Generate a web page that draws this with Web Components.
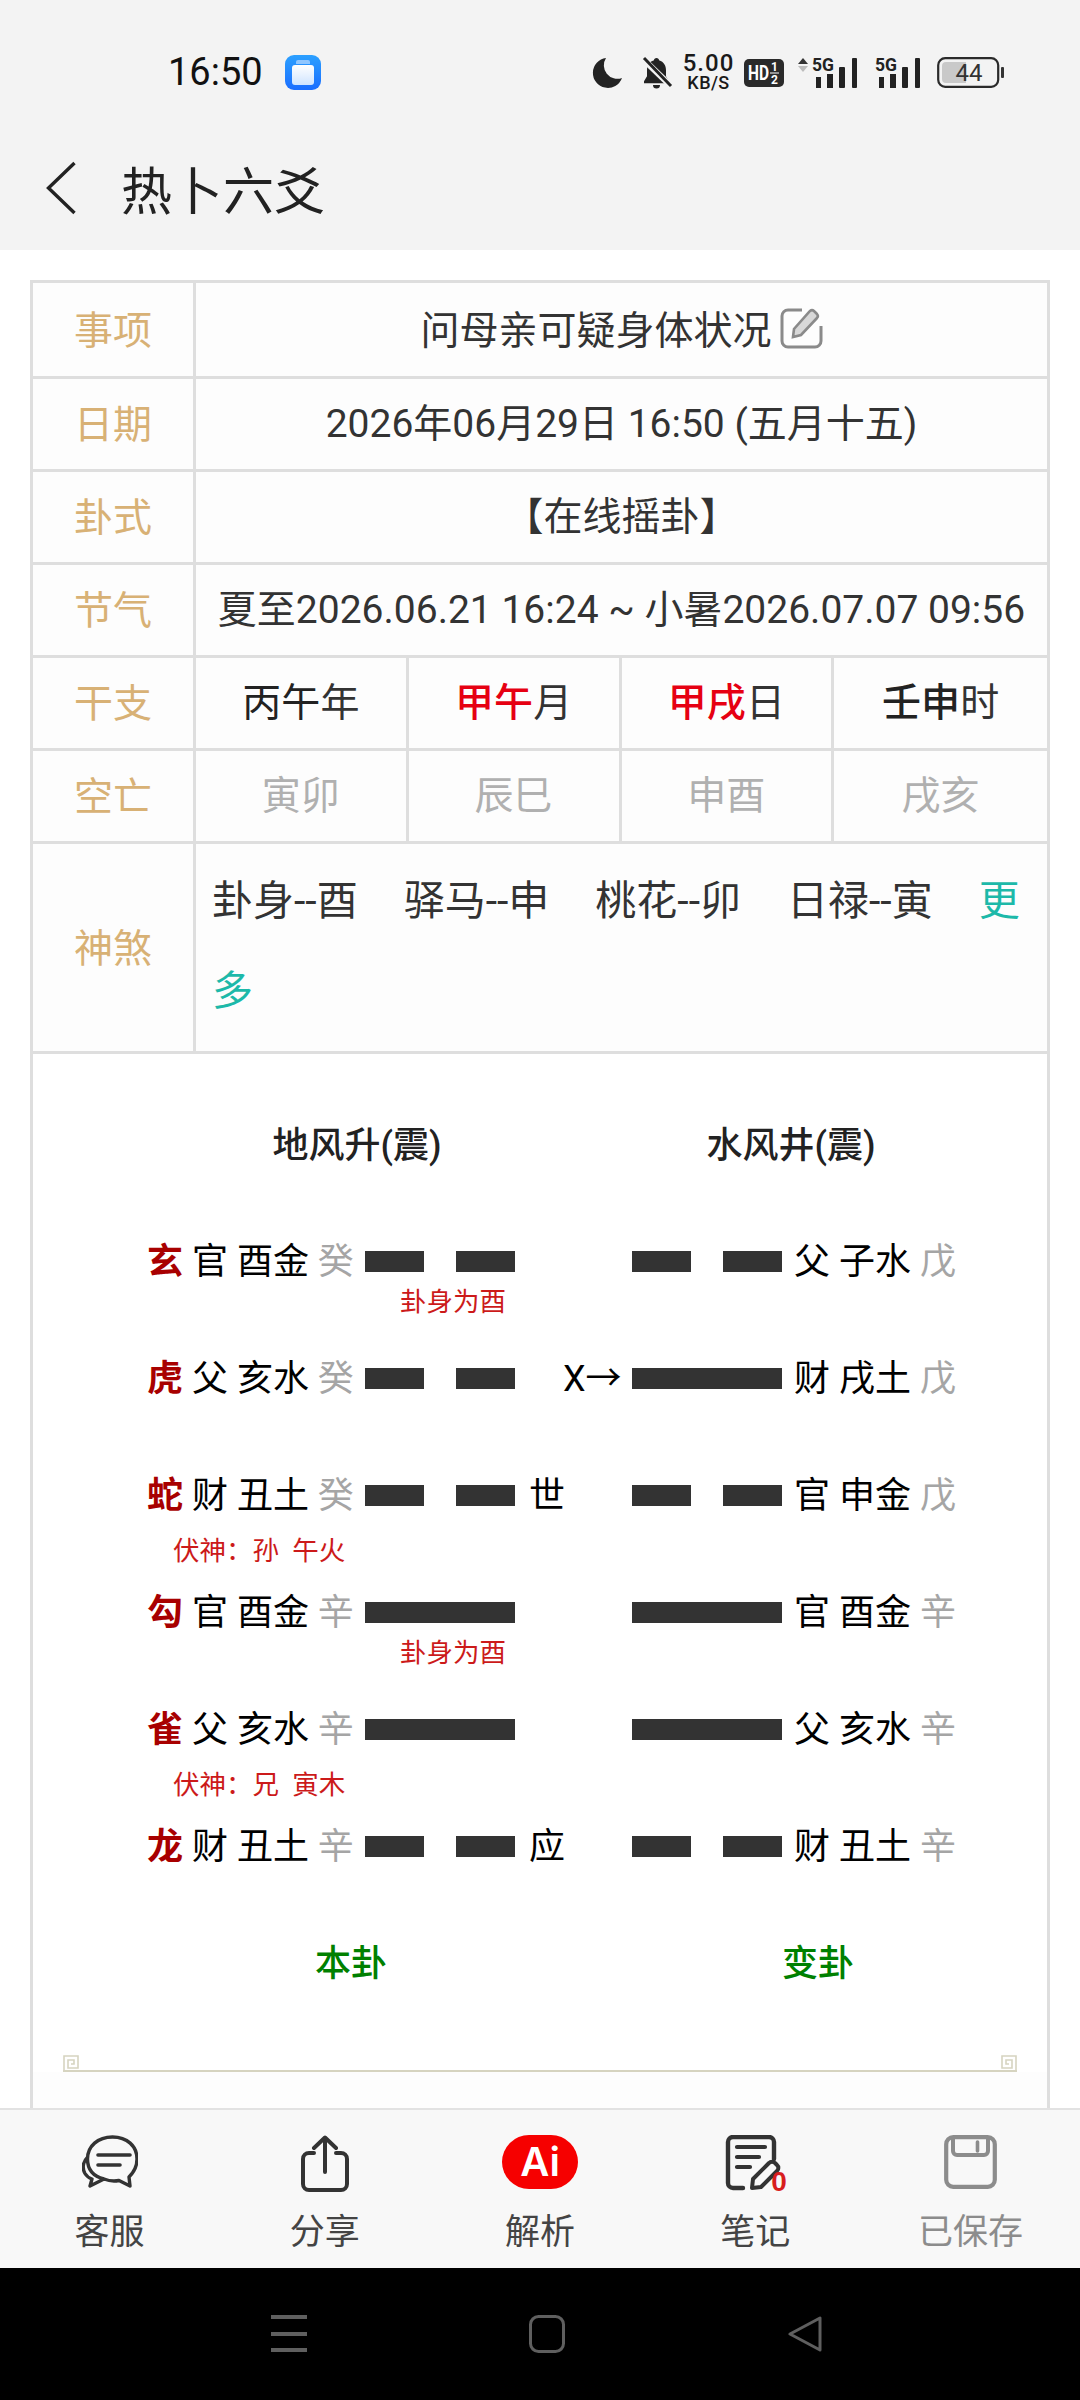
<!DOCTYPE html>
<html lang="zh-CN">
<head>
<meta charset="utf-8">
<title>热卜六爻</title>
<style>
html,body{margin:0;padding:0;background:#fff}
body{font-family:Roboto,"Noto Sans CJK SC",sans-serif}
</style>
</head>
<body>
<app-shell>
  <status-bar slot="top"></status-bar>
  <title-bar slot="top">热卜六爻</title-bar>
  <info-table>
    <info-row label="事项" first><edit-note>问母亲可疑身体状况</edit-note></info-row>
    <info-row label="日期">2026年06月29日 16:50 (五月十五)</info-row>
    <info-row label="卦式">【在线摇卦】</info-row>
    <info-row label="节气">夏至2026.06.21 16:24 ~ 小暑2026.07.07 09:56</info-row>
    <quad-row label="干支">
      <span><b style="font-weight:400;color:#222">丙午</b>年</span>
      <span><b style="font-weight:500;color:#e60012">甲午</b>月</span>
      <span><b style="font-weight:500;color:#e60012">甲戌</b>日</span>
      <span><b style="font-weight:500;color:#222">壬申</b>时</span>
    </quad-row>
    <quad-row label="空亡" muted>
      <span>寅卯</span><span>辰巳</span><span>申酉</span><span>戌亥</span>
    </quad-row>
    <shensha-row label="神煞">
      <span>卦身--酉</span><span>驿马--申</span><span>桃花--卯</span><span>日禄--寅</span><more-link>更多</more-link>
    </shensha-row>
    <hex-chart>
      <yao-row god="玄" left="官 酉金" lgan="癸" a="yin" right="父 子水" rgan="戊" b="yin"><span slot="barnote">卦身为酉</span></yao-row>
      <yao-row god="虎" left="父 亥水" lgan="癸" a="yin" right="财 戌土" rgan="戊" b="yang"><span slot="change">X→</span></yao-row>
      <yao-row god="蛇" left="财 丑土" lgan="癸" a="yin" right="官 申金" rgan="戊" b="yin"><span slot="shi">世</span><span slot="fu">伏神：孙&nbsp;&nbsp;午火</span></yao-row>
      <yao-row god="勾" left="官 酉金" lgan="辛" a="yang" right="官 酉金" rgan="辛" b="yang"><span slot="barnote">卦身为酉</span></yao-row>
      <yao-row god="雀" left="父 亥水" lgan="辛" a="yang" right="父 亥水" rgan="辛" b="yang"><span slot="fu">伏神：兄&nbsp;&nbsp;寅木</span></yao-row>
      <yao-row god="龙" left="财 丑土" lgan="辛" a="yin" right="财 丑土" rgan="辛" b="yin"><span slot="shi">应</span></yao-row>
    </hex-chart>
  </info-table>
  <bottom-nav slot="bottom"></bottom-nav>
  <system-nav slot="bottom"></system-nav>
</app-shell>

<script>
const def=(name,html)=>customElements.define(name,class extends HTMLElement{
  constructor(){super();this.attachShadow({mode:'open'}).innerHTML=html}
});

def('app-shell',`<style>
:host{display:flex;flex-direction:column;width:1080px;height:2400px;overflow:hidden;background:#fff}
.main{flex:1;min-height:0;overflow:hidden;padding:30px 30px 0}
</style>
<slot name="top"></slot><div class="main"><slot></slot></div><slot name="bottom"></slot>`);

def('status-bar',`<style>
:host{display:flex;align-items:center;height:55px;padding:45px 76px 0 168px;background:#f3f3f3;color:#111;font-family:Roboto,sans-serif;box-sizing:content-box}
.time{font-size:38px;line-height:44px;width:95px;margin-top:-1px}
.app{width:36px;height:35px;border-radius:9px;margin-left:22px;background:linear-gradient(#2ba0ff,#1a6dff);display:flex;flex-direction:column;align-items:center;justify-content:center}
.app i{display:block;width:14px;height:4px;background:#8fc6ff;border-radius:2px 2px 0 0;margin-bottom:1px}
.app b{display:block;width:22px;height:20px;background:linear-gradient(#fff,#cfe4ff);border-radius:3px}
svg{display:block;flex:none;overflow:visible}
.right{margin-left:auto;display:flex;align-items:center}
.speed{width:53px;margin-left:10px;text-align:center;font-weight:500;color:#1a1a1a}
.speed div:first-child{font-size:24px;line-height:18px;letter-spacing:1px}
.speed div:last-child{font-size:18px;line-height:17px;margin-top:2px;letter-spacing:.4px}
</style>
<div class="time">16:50</div>
<div class="app"><i></i><b></b></div>
<div class="right">
<svg width="30" height="31" viewBox="0 0 30 31"><path d="M13 1A15 15 0 1 0 29 21A13.5 13.5 0 0 1 13 1Z" fill="#232323"/></svg>
<svg width="30" height="34" viewBox="0 0 30 34" style="margin-left:19px"><path d="M14.5 2c1.5 0 2.5 1 2.5 2.2c5 1.5 7 5.5 7 10v6l3 5v2H2v-2l3-5v-6c0-4.5 2-8.5 7-10C12 3 13 2 14.5 2Z" fill="#232323"/><path d="M11 29h7a3.5 3.5 0 0 1-7 0Z" fill="#232323"/><path d="M1 3l28 27" stroke="#f3f3f3" stroke-width="6"/><path d="M2 2l27 28" stroke="#232323" stroke-width="3"/></svg>
<div class="speed"><div>5.00</div><div>KB/S</div></div>
<svg width="40" height="28" viewBox="0 0 40 28" style="margin-left:9px"><rect width="40" height="28" rx="5" fill="#2a2a2a"/><text x="4" y="21" font-family="Roboto" font-weight="700" font-size="20" fill="#fff" textLength="21" lengthAdjust="spacingAndGlyphs">HD</text><text x="27" y="12" font-family="Roboto" font-weight="700" font-size="12" fill="#fff">1</text><path d="M26 14h9" stroke="#fff" stroke-width="1"/><text x="27" y="25" font-family="Roboto" font-weight="700" font-size="12" fill="#fff">2</text></svg>
<svg width="60" height="40" viewBox="0 -4 60 40" style="margin-left:14px"><path d="M5 1l5 6H0Z" fill="#333"/><path d="M5 15l5-6H0Z" fill="#bbb"/><text x="14" y="14" font-family="Roboto" font-weight="700" font-size="19" fill="#222" textLength="22" lengthAdjust="spacingAndGlyphs">5G</text><rect x="18" y="20" width="5" height="11" fill="#222"/><rect x="29" y="17" width="6" height="14" fill="#222"/><rect x="41" y="10" width="6" height="21" rx="1" fill="#222"/><rect x="54" y="1" width="5" height="30" rx="1" fill="#222"/></svg>
<svg width="46" height="40" viewBox="0 -4 46 40" style="margin-left:17px"><text x="0" y="14" font-family="Roboto" font-weight="700" font-size="19" fill="#222" textLength="22" lengthAdjust="spacingAndGlyphs">5G</text><rect x="4" y="20" width="5" height="11" fill="#222"/><rect x="15" y="17" width="6" height="14" fill="#222"/><rect x="27" y="10" width="6" height="21" rx="1" fill="#222"/><rect x="40" y="1" width="5" height="30" rx="1" fill="#222"/></svg>
<svg width="67" height="32" viewBox="0 0 67 32" style="margin-left:16px"><rect x="1.2" y="1.2" width="60" height="28.6" rx="7" fill="none" stroke="#2a2a2a" stroke-width="2.2"/><path d="M9 5h20v21H9a4 4 0 0 1-4-4V9a4 4 0 0 1 4-4Z" fill="#c9c9c9"/><rect x="64" y="10" width="3" height="11" rx="1" fill="#333"/><text x="32" y="24" text-anchor="middle" font-family="Roboto" font-size="24" fill="#333">44</text></svg>
</div>`);

def('title-bar',`<style>
:host{display:flex;align-items:center;height:124px;padding-top:26px;background:#f3f3f3;color:#222;font-size:51px;font-family:"Noto Sans CJK SC",sans-serif}
svg{display:block;margin-left:46px;margin-right:45px}
</style>
<svg width="30" height="54" viewBox="0 0 30 54"><path d="M28.5 2L2.5 27L28.5 52" fill="none" stroke="#222" stroke-width="3.4"/></svg><slot></slot>`);

def('info-table',`<style>
:host{display:block;border:3px solid #dedede;border-bottom:0;background:#fdfdfd;color:#333;font-size:39px;height:1900px;box-sizing:border-box}
</style><slot></slot>`);

const rowStyle=`
:host{display:grid;grid-template-columns:163px 1fr;height:93px;box-sizing:border-box;border-top:3px solid #dedede}
.l{display:flex;align-items:center;justify-content:center;color:#d8b175;border-right:3px solid #dedede;padding-bottom:6px}
`;
customElements.define('info-row',class extends HTMLElement{
  constructor(){super();const s=this.attachShadow({mode:'open'});
    s.innerHTML=`<style>${rowStyle}
    :host([first]){border-top:0}
    :host([first]) .v{padding-bottom:6px}
    .v{display:flex;align-items:center;justify-content:center;white-space:nowrap;padding-bottom:9px}
    </style><div class="l"></div><div class="v"><slot></slot></div>`;}
  connectedCallback(){this.shadowRoot.querySelector('.l').textContent=this.getAttribute('label')}
});
def('edit-note',`<style>:host{display:flex;align-items:center}
svg{display:block;margin-left:8px;margin-top:3px}</style>
<slot></slot><svg width="43" height="42" viewBox="0 0 43 42"><path d="M22 3H8a6 6 0 0 0-6 6V34a6 6 0 0 0 6 6H35a6 6 0 0 0 6-6V19" fill="none" stroke="#8a8a8a" stroke-width="3"/><path d="M13 30l1-8L30 4a3 3 0 0 1 4 0l3 3a3 3 0 0 1 0 4L21 28Z" fill="#d8d8d8" stroke="#8a8a8a" stroke-width="2.6"/></svg>`);

customElements.define('quad-row',class extends HTMLElement{
  constructor(){super();const s=this.attachShadow({mode:'open'});
    s.innerHTML=`<style>${rowStyle}
    :host([muted]) .v{color:#b0b0b0}
    .v{display:grid;grid-template-columns:repeat(4,1fr)}
    ::slotted(span){display:flex;align-items:center;justify-content:center;border-right:3px solid #dedede;padding-bottom:9px}
    ::slotted(span:last-child){border-right:0}
    </style><div class="l"></div><div class="v"><slot></slot></div>`;}
  connectedCallback(){this.shadowRoot.querySelector('.l').textContent=this.getAttribute('label')}
});

customElements.define('shensha-row',class extends HTMLElement{
  constructor(){super();const s=this.attachShadow({mode:'open'});
    s.innerHTML=`<style>${rowStyle}
    :host{height:210px}
    .v{padding:12px 0 0 16px;line-height:90px;font-size:41px}
    ::slotted(span){margin-right:46px;white-space:nowrap}
    </style><div class="l"></div><div class="v"><slot></slot></div>`;}
  connectedCallback(){this.shadowRoot.querySelector('.l').textContent=this.getAttribute('label')}
});
def('more-link',`<style>:host{color:#1db9a9}</style><slot></slot>`);

def('hex-chart',`<style>
:host{display:block;border-top:3px solid #dedede;background:#fff;padding-top:67px;font-size:36px;color:#000}
.titles,.foot{display:grid;line-height:50px;height:50px;text-align:center;white-space:nowrap}
.titles{grid-template-columns:648px 220px;font-weight:500;color:#222;margin-bottom:66px}
.foot{grid-template-columns:636px 298px;color:#008000;font-weight:500}
.orn{display:flex;justify-content:space-between;height:15px;margin:66px 30px 0;border-bottom:2px solid #d6d4c0}
svg{display:block}
</style>
<div class="titles"><span>地风升(震)</span><span>水风井(震)</span></div>
<slot></slot>
<div class="foot"><span>本卦</span><span>变卦</span></div>
<div class="orn">
<svg width="16" height="16" viewBox="0 0 16 16"><path d="M1 16V1H15V13H5V5H11V9H8" fill="none" stroke="#d6d4c0" stroke-width="1.6"/></svg>
<svg width="16" height="16" viewBox="0 0 16 16" style="transform:scaleX(-1)"><path d="M1 16V1H15V13H5V5H11V9H8" fill="none" stroke="#d6d4c0" stroke-width="1.6"/></svg>
</div>`);

customElements.define('yao-row',class extends HTMLElement{
  constructor(){super();this.attachShadow({mode:'open'})}
  connectedCallback(){
    const a=k=>this.getAttribute(k);
    const bar=t=>t==='yang'?'<div class="bar"><i></i></div>':'<div class="bar"><i></i><i></i></div>';
    this.shadowRoot.innerHTML=`<style>
    :host{display:block;height:117px;white-space:nowrap;line-height:50px}
    .line{display:grid;grid-template-columns:332px 150px 117px 150px 1fr;height:50px;align-items:center}
    .left{padding-left:114px}
    .god{color:#a80000;font-weight:700}
    .gan{color:#a5a5a5}
    .bar{display:flex;justify-content:space-between;height:21px;margin-top:-2px}
    .bar i{flex:0 0 59px;background:#333}
    .bar i:only-child{flex:1}
    .mid{display:flex;justify-content:space-between;padding:0 14px}
    .right{padding-left:12px}
    .notes{display:grid;grid-template-columns:332px 150px;font-size:26.5px;line-height:30px;color:#cc1a1a}
    .fu{padding:15px 0 0 140px;display:block}
    .bn{padding:0 0 0 35px;display:block;white-space:nowrap}
    ::slotted([slot=change]){margin-left:34px}
    </style>
    <div class="line">
      <div class="left"><span class="god">${a('god')}</span> ${a('left')} <span class="gan">${a('lgan')}</span></div>
      ${bar(a('a'))}
      <div class="mid"><slot name="shi"></slot><slot name="change"></slot></div>
      ${bar(a('b'))}
      <div class="right">${a('right')} <span class="gan">${a('rgan')}</span></div>
    </div>
    <div class="notes"><div class="fu"><slot name="fu"></slot></div><div class="bn"><slot name="barnote"></slot></div></div>`;
  }
});

def('bottom-nav',`<style>
:host{display:flex;height:160px;box-sizing:border-box;border-top:2px solid #e2e2e2;background:#f8f8f8;padding:25px 2px 0}
</style>
<nav-item><svg slot="icon" width="56" height="56" viewBox="0 0 56 56"><path d="M22 44C10 41 5.5 33 5.5 24C5.5 11 16 2 30.5 2C45 2 55 11 55 24C55 33 50 39 47 42L48 51L37 45.5C32 46.5 27 46 22 44L8 51L10 44C7 43 4.5 41 3 38.5C0 33 1 27 5.8 22" fill="none" stroke="#333" stroke-width="3.4" stroke-linejoin="round"/><path d="M16 20H48M16 30H38" stroke="#333" stroke-width="3.6" stroke-linecap="round"/></svg>客服</nav-item>
<nav-item><svg slot="icon" width="48" height="57" viewBox="0 0 48 57"><path d="M13 18H8a6 6 0 0 0-6 6V49a6 6 0 0 0 6 6H40a6 6 0 0 0 6-6V24a6 6 0 0 0-6-6H35M24 37V3M13 13L24 2.5L35 13" fill="none" stroke="#333" stroke-width="4" stroke-linecap="round" stroke-linejoin="round"/></svg>分享</nav-item>
<nav-item><ai-badge slot="icon">Ai</ai-badge>解析</nav-item>
<nav-item><note-icon slot="icon"></note-icon>笔记</nav-item>
<nav-item muted><svg slot="icon" width="53" height="54" viewBox="0 0 53 54"><rect x="2.2" y="2.2" width="48.6" height="49.6" rx="7" fill="none" stroke="#8c8c8c" stroke-width="4.2"/><path d="M9 3V16a4 4 0 0 0 4 4H40a4 4 0 0 0 4-4V3" fill="none" stroke="#8c8c8c" stroke-width="4"/><path d="M33.5 7V16" stroke="#8c8c8c" stroke-width="3.6" stroke-linecap="round"/></svg>已保存</nav-item>`);

def('nav-item',`<style>
:host{flex:1;display:block;text-align:center;font-family:"Noto Sans CJK SC",sans-serif;font-size:35px;line-height:40px;color:#444}
:host([muted]){color:#8c8c8c}
.i{display:flex;justify-content:center;height:57px;margin-bottom:17px}
::slotted(svg){display:block}
</style><div class="i"><slot name="icon"></slot></div><slot></slot>`);

def('ai-badge',`<style>
:host{display:flex;align-items:center;justify-content:center;width:76px;height:54px;border-radius:27px;background:#f60000;color:#fff;font-family:Inter,Roboto,sans-serif;font-size:40px;font-weight:600;line-height:54px}
</style><slot></slot>`);

def('note-icon',`<style>
:host{display:block;position:relative;width:60px;height:57px}
svg{display:block}
b{position:absolute;left:46px;top:33px;font:700 28px/27px "Liberation Sans",sans-serif;color:#d81e1e}
</style><svg width="60" height="57" viewBox="0 0 60 57"><path d="M18 53H8a5 5 0 0 1-5-5V7a5 5 0 0 1 5-5H44a5 5 0 0 1 5 5V24" fill="none" stroke="#333" stroke-width="4.4" stroke-linecap="round"/><path d="M12 12H40M12 22H34M12 32H25" stroke="#333" stroke-width="4.2" stroke-linecap="round"/><path d="M27 53L28 44L44 28a4 4 0 0 1 6 0l2 2a4 4 0 0 1 0 6L36 52Z" fill="none" stroke="#333" stroke-width="4" stroke-linejoin="round"/></svg><b>0</b>`);

def('system-nav',`<style>
:host{display:flex;align-items:center;height:132px;background:#000;padding-left:271px;box-sizing:border-box}
svg{display:block}
</style>
<svg width="36" height="38" viewBox="0 0 36 38"><path d="M0 2H36M0 19H36M0 35H36" stroke="#5f5f5f" stroke-width="4"/></svg>
<svg width="36" height="38" viewBox="0 0 36 38" style="margin-left:222px"><rect x="1.5" y="1.5" width="33" height="35" rx="8" fill="none" stroke="#5f5f5f" stroke-width="3"/></svg>
<svg width="34" height="36" viewBox="0 0 34 36" style="margin-left:223px"><path d="M32 2V34L2 18Z" fill="none" stroke="#5f5f5f" stroke-width="3" stroke-linejoin="round"/></svg>`);
</script>
</body>
</html>
